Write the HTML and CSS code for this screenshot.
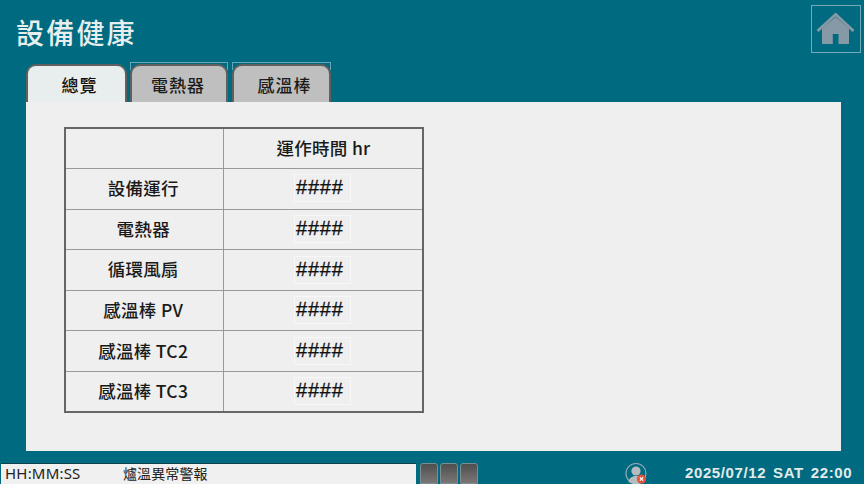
FILE: index.html
```html
<!DOCTYPE html>
<html lang="zh-Hant">
<head>
<meta charset="utf-8">
<title>設備健康</title>
<link rel="stylesheet" href="styles.css">
</head>
<body>
<div class="screen">
  <header class="top">
    <h1 class="title">設備健康</h1>
    <button class="home" aria-label="home">
      <svg width="42" height="36" viewBox="815 10 42 36"><path class="roof" d="M817.5 30 L835.7 13.5 L853.5 30" /><path class="house" fill-rule="evenodd" d="M822 27.5 L835.7 16 L849 27.5 V43 H838.5 V33 H832.8 V43 H822 Z"/></svg>
    </button>
  </header>
  <nav class="tabs">
    <div class="tab active">總覽</div>
    <div class="tab second">電熱器</div>
    <div class="tab third">感溫棒</div>
  </nav>
  <main class="panel">
    <table class="grid">
      <tr><th class="c1"></th><th class="c2">運作時間 hr</th></tr>
      <tr><th>設備運行</th><td><span class="val">####</span></td></tr>
      <tr><th>電熱器</th><td><span class="val">####</span></td></tr>
      <tr><th>循環風扇</th><td><span class="val">####</span></td></tr>
      <tr><th>感溫棒 PV</th><td><span class="val">####</span></td></tr>
      <tr><th>感溫棒 TC2</th><td><span class="val">####</span></td></tr>
      <tr><th>感溫棒 TC3</th><td><span class="val">####</span></td></tr>
    </table>
  </main>
  <footer class="status">
    <div class="alarm"><span class="time">HH:MM:SS</span><span class="msg">爐溫異常警報</span></div>
    <div class="keys"><span class="key"></span><span class="key"></span><span class="key"></span></div>
    <svg class="user" width="24" height="21" viewBox="0 0 24 21"><circle cx="11" cy="10.5" r="10" fill="none" stroke="#8fa9b3" stroke-width="1.2"/><circle cx="11" cy="8" r="4.6" fill="#b5bcbf"/><path d="M3.5 19 C4 14.5 8 13 11 13 C14 13 18 14.5 18.5 19 L14 21 H8 Z" fill="#b5bcbf"/><circle cx="16.5" cy="16" r="4.6" fill="#e0553a"/><path d="M14.9 14.4 L18.1 17.6 M18.1 14.4 L14.9 17.6" stroke="#fff" stroke-width="1.3"/></svg>
    <div class="clock"><span>2025/07/12</span><span>SAT</span><span>22:00</span></div>
  </footer>
</div>
</body>
</html>
```
FILE: styles.css
```css
* { box-sizing: border-box; }
html, body { margin: 0; padding: 0; }
body { width: 864px; height: 484px; overflow: hidden; background: #006a80; font-family: "Noto Sans CJK TC", "Noto Sans", sans-serif; }
.screen { display: flex; flex-direction: column; height: 484px; }
.top { height: 64px; display: flex; justify-content: space-between; align-items: flex-start; padding: 5px 3px 0 16px; }
.title { margin: 6px 0 0; font-size: 28px; font-weight: 500; line-height: 42px; letter-spacing: 2.2px; color: #e6eeee; }
.home { width: 50px; height: 48px; padding: 0; margin: 0; background: transparent; border: 1px solid #72aab8; display: flex; align-items: center; justify-content: center; }
.roof { fill: none; stroke: #8699a6; stroke-width: 3; }
.house { fill: #8699a6; }
.tabs { display: flex; height: 38px; padding-left: 26px; }
.tab { position: relative; width: 98px; height: 38px; margin-left: 3px; border: 2px solid #606060; border-bottom: 0; border-radius: 10px 10px 0 0; background: #bfbfbf; color: #1c1c1c; font-size: 17px; font-weight: 500; line-height: 38px; text-align: center; letter-spacing: 1px; }
.tab.second::before, .tab.third::before { content: ""; position: absolute; left: -2px; right: -2px; top: -4px; height: 7px; border: 1px solid #6aa5b3; border-bottom: 0; pointer-events: none; }
.tab.second { padding-right: 2px; }
.tab.third { width: 99px; margin-left: 4px; padding-left: 6px; }
.tab.active { width: 101px; margin-left: 0; background: #e8eeee; color: #111; padding-left: 6px; }
.panel { width: 815px; height: 349px; margin-left: 26px; background: #efefef; padding: 25px 38px; }
.grid { width: 359.5px; height: 286px; border-collapse: collapse; border: 2px solid #666; table-layout: fixed; }
.grid th, .grid td { border: 1px solid #999; padding: 0 0 2px; text-align: center; font-size: 17.5px; font-weight: 500; letter-spacing: 0.3px; color: #1a1a1a; height: 40px; }
.grid th { padding-right: 2px; }
.grid .c2 { padding-right: 0; padding-left: 2px; }
.c1 { width: 158px; }
.val { display: inline-block; width: 57px; height: 28px; line-height: 25px; border: 1px solid #f7f7f7; font-family: "Liberation Sans", sans-serif; font-size: 20px; font-weight: 400; letter-spacing: 0.8px; text-align: left; padding-left: 1px; color: #111; vertical-align: middle; -webkit-text-stroke: 0.3px #111; }
.status { margin-top: 12px; height: 21px; display: flex; align-items: flex-start; padding-left: 1px; }
.alarm { width: 415px; height: 21px; background: #f0f0f0; border-top: 1px solid #10404c; display: flex; font-size: 14px; line-height: 18px; color: #222; padding-left: 4px; }
.time { width: 118px; font-family: "Noto Sans", sans-serif; font-size: 15px; letter-spacing: 0.2px; }
.msg { letter-spacing: 0.1px; }
.keys { display: flex; margin-left: 4px; gap: 2px; }
.key { width: 18px; height: 21px; border-radius: 3px 3px 0 0; background: linear-gradient(#4f4f4f, #7a7676); border: 1px solid #7d8e92; }
.user { margin-left: 147px; }
.clock { margin-left: 36px; display: flex; gap: 7px; font-family: "Liberation Sans", sans-serif; font-weight: 700; font-size: 15px; line-height: 20px; color: #e2eaea; letter-spacing: 0.6px; }
```
